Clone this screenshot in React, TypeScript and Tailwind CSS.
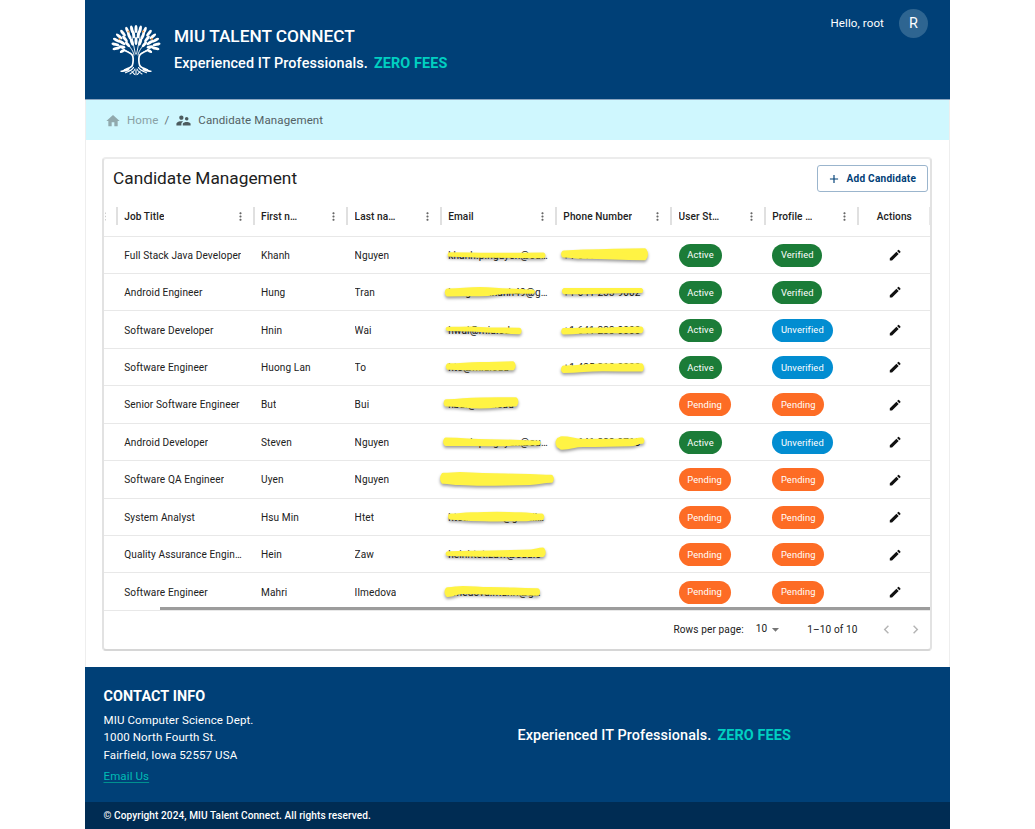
import type { ReactNode } from 'react';
import {
  MdAdd,
  MdArrowDropDown,
  MdChevronLeft,
  MdChevronRight,
  MdEdit,
  MdHome,
  MdMoreVert,
  MdSupervisorAccount,
} from 'react-icons/md';

type Station = [x: number, top: number, bottom: number];
type Status = 'Active' | 'Verified' | 'Unverified' | 'Pending';

interface Candidate {
  title: string;
  first: string;
  last: string;
  email: string;
  emailMark: Station[];
  phone?: string;
  phoneMark?: Station[];
  status: Status;
  profile: Status;
}

const candidates: Candidate[] = [
  {
    title: 'Full Stack Java Developer', first: 'Khanh', last: 'Nguyen',
    email: 'khanh.p.nguyen@ou…', emailMark: [[6.3, 15.2, 19.8], [50, 15.8, 20.8], [104.7, 15.5, 21.2]],
    phone: '+1 641 451 0000', phoneMark: [[5.1, 13.5, 20.6], [27, 12.5, 21.8], [91.1, 11.2, 23.2]],
    status: 'Active', profile: 'Verified',
  },
  {
    title: 'Android Engineer', first: 'Hung', last: 'Tran',
    email: 'hung.tranhanh49@g…', emailMark: [[4, 14.4, 22.4], [39, 13.1, 22.2], [69, 14.4, 19.8], [94.3, 15.5, 19.8]],
    phone: '+1 641 233 9002', phoneMark: [[5.8, 14.1, 20.2], [87.5, 14, 19.1]],
    status: 'Active', profile: 'Verified',
  },
  {
    title: 'Software Developer', first: 'Hnin', last: 'Wai',
    email: 'hwai@miu.edu', emailMark: [[4.3, 15.7, 20], [30, 15.6, 20.4], [49, 16.4, 21.7], [80.7, 16.7, 23.2]],
    phone: '+1 641 233 0000', phoneMark: [[5.1, 17, 23.5], [40, 16.4, 22.2], [87.5, 15.4, 22.2]],
    status: 'Active', profile: 'Unverified',
  },
  {
    title: 'Software Engineer', first: 'Huong Lan', last: 'To',
    email: 'hto@miu.edu', emailMark: [[4.7, 14.3, 20.8], [39, 13, 21.6], [74.3, 12.3, 21.2]],
    phone: '+1 425 310 0000', phoneMark: [[5.1, 16.5, 24], [47, 14.6, 22.2], [87.8, 14.3, 22.6]],
    status: 'Active', profile: 'Unverified',
  },
  {
    title: 'Senior Software Engineer', first: 'But', last: 'Bui',
    email: 'hbui@miu.edu', emailMark: [[2.7, 13.2, 20.6], [39, 11.4, 22.4], [77, 11.2, 20.4]],
    status: 'Pending', profile: 'Pending',
  },
  {
    title: 'Android Developer', first: 'Steven', last: 'Nguyen',
    email: 'khanh.p.nguyen@ou…', emailMark: [[2.3, 13.6, 22], [49, 15.2, 22.2], [100, 16.4, 21.2]],
    phone: '+1 641 233 9710', phoneMark: [[0.1, 13.6, 24], [6, 12.2, 25.8], [27, 14.8, 23], [74, 14.6, 22.3], [88.5, 13.6, 19.8]],
    status: 'Active', profile: 'Unverified',
  },
  {
    title: 'Software QA Engineer', first: 'Uyen', last: 'Nguyen',
    email: '', emailMark: [[-0.3, 11.8, 22.8], [19, 11.1, 24], [42, 12.1, 24.8], [89, 13, 24], [112.7, 13.8, 21.8]],
    status: 'Pending', profile: 'Pending',
  },
  {
    title: 'System Analyst', first: 'Hsu Min', last: 'Htet',
    email: 'htet.hsumin@gmail…', emailMark: [[7, 14.6, 20.7], [30, 13.2, 22], [56, 12.7, 22.5], [80, 13.2, 22.2], [103.3, 14.6, 21.2]],
    status: 'Pending', profile: 'Pending',
  },
  {
    title: 'Quality Assurance Engineer', first: 'Hein', last: 'Zaw',
    email: 'heinhtet.zaw@edu.c', emailMark: [[4.3, 15.3, 20], [49, 14.4, 20.8], [90, 13.4, 21], [104.3, 11.6, 21]],
    status: 'Pending', profile: 'Pending',
  },
  {
    title: 'Software Engineer', first: 'Mahri', last: 'Ilmedova',
    email: 'ilmedova.mahri@g…', emailMark: [[4, 14.2, 24], [22, 12.9, 20.9], [49, 14, 21.8], [99, 15.2, 22.7]],
    status: 'Pending', profile: 'Pending',
  },
];

const GRID =
  'grid grid-cols-[13px_136.8px_93.6px_93.6px_115.2px_115.2px_93.6px_93.6px_72px]';

const chipColors: Record<Status, string> = {
  Active: 'bg-[#1b7c38]',
  Verified: 'bg-[#1b7c38]',
  Unverified: 'bg-[#028dd1]',
  Pending: 'bg-[#fd6c25]',
};

/** Builds a rounded marker stroke outline from its cross-sections. */
function markerPath(stations: Station[]) {
  const inset = 2;
  const last = stations.length - 1;
  const xs = stations.map(([x], i) => x + (i === 0 ? 2.5 : i === last ? -2.5 : 0));
  const top = stations.map((s, i) => [xs[i], s[1] + inset]);
  const bottom = stations.map((s, i) => [xs[i], s[2] - inset]).reverse();
  const curve = (pts: number[][]) =>
    pts
      .slice(1)
      .map(([x, y], i) => {
        const [px, py] = pts[i];
        const mx = (px + x) / 2;
        return `C${mx} ${py} ${mx} ${y} ${x} ${y}`;
      })
      .join('');
  const [rx, ry] = bottom[0];
  const tr = top[last];
  const bulgeR = Math.max(0, (ry - tr[1]) / 3);
  const lb = bottom[last];
  const bulgeL = Math.max(0, (lb[1] - top[0][1]) / 3);
  return (
    `M${top[0][0]} ${top[0][1]}` + curve(top) +
    `Q${rx + bulgeR} ${(ry + tr[1]) / 2} ${rx} ${ry}` + curve(bottom) +
    `Q${lb[0] - bulgeL} ${(lb[1] + top[0][1]) / 2} ${top[0][0]} ${top[0][1]}Z`
  );
}

function Marker({ stations }: { stations: Station[] }) {
  return (
    <svg
      width="115"
      height="37"
      className="absolute top-0 left-0 overflow-visible drop-shadow-[0_2px_1.5px_rgba(0,0,0,0.38)]"
    >
      <path d={markerPath(stations)} fill="#fff344" stroke="#fff344" strokeWidth="4" strokeLinejoin="round" />
    </svg>
  );
}

function Chip({ label }: { label: Status }) {
  return (
    <span
      className={`flex h-[23px] items-center rounded-full px-[8.8px] pt-[0.5px] text-[9.36px] tracking-[0.0107em] text-white ${chipColors[label]}`}
    >
      {label}
    </span>
  );
}

function HeaderCell({ label }: { label: string }) {
  return (
    <div className="flex min-w-0 items-center justify-between border-r-2 border-[#e0e0e0] pr-[6px] pl-[6.4px]">
      <span className="truncate">{label}</span>
      <MdMoreVert className="size-[13px] shrink-0 text-[#666]" />
    </div>
  );
}

function Cell({ children }: { children?: ReactNode }) {
  return <div className="relative flex min-w-0 items-center px-[7.2px] pt-[1px]">{children}</div>;
}

function Text({ children }: { children: ReactNode }) {
  return <span className="truncate">{children}</span>;
}

const leaves: [x: number, y: number, angle: number, length: number][] = [
  [25, 4, 0, 8], [20.8, 4.4, -12, 8], [29.2, 4.4, 12, 8], [16.4, 5.6, -24, 8], [33.6, 5.6, 24, 8],
  [12, 8.2, -38, 8], [38, 8.2, 38, 8], [8.2, 11.4, -50, 8], [41.8, 11.4, 50, 8],
  [5.6, 15.2, -62, 8], [44.4, 15.2, 62, 8], [4.4, 19.4, -76, 8], [45.6, 19.4, 76, 8],
  [5.4, 23.4, -104, 8], [44.6, 23.4, 104, 8],
  [22.6, 9.5, -8, 8], [27.4, 9.5, 8, 8], [18.2, 11, -22, 8], [31.8, 11, 22, 8],
  [14, 13.8, -38, 8], [36, 13.8, 38, 8], [11, 17.6, -56, 8], [39, 17.6, 56, 8],
  [11, 22, -80, 7], [39, 22, 80, 7], [11.5, 26, -120, 6], [38.5, 26, 120, 6],
  [20.8, 17, -18, 8], [29.2, 17, 18, 8], [16.6, 19.4, -40, 7], [33.4, 19.4, 40, 7],
  [25, 16, 0, 8],
];

function TreeLogo() {
  return (
    <svg viewBox="0 0 50 51" className="h-[51px] w-[50px]" fill="none">
      {leaves.map(([x, y, angle, length], i) => (
        <ellipse key={i} cx={x} cy={y} rx="1.5" ry={length / 2} fill="#fff" transform={`rotate(${angle} ${x} ${y})`} />
      ))}
      <g stroke="#fff" strokeWidth="0.9" strokeLinecap="round">
        <path d="M22 31C20 27 14 26 8 21M28 31C30 27 36 26 42 21M23 30C22 24 17 21 14 14M27 30C28 24 33 21 36 14M24.4 29L21 12M25.6 29L29 12" />
      </g>
      <path
        d="M13.5 25.5c3.5 1.4 6.8 2.7 8 5 1 2.5.8 7.5-.2 10-1.3 2.2-4.5 3.2-7.8 4.300M36.5 25.5c-3.5 1.4-6.8 2.7-8 5-1 2.5-.8 7.5.2 10 1.300 2.200 4.500 3.200 7.800 4.300"
        stroke="#fff"
        strokeWidth="1.7"
        strokeLinecap="round"
      />
      <g stroke="#fff" strokeWidth="1.1" strokeLinecap="round">
        <path d="M18 43.5C15.5 45 12.5 45.6 9.5 46.2 13 46.8 15.5 46 18 44.8M32 43.5c2.5 1.5 5.5 2.1 8.5 2.7-3.5.6-6-.2-8.5-1.4M22.5 42.5c-1 2.5-4 3.6-8 5.2M27.5 42.5c1 2.5 4 3.6 8 5.2M24 44c-.5 2.2-2.5 3.2-5 5M26 44c.5 2.2 2.5 3.2 5 5M25 45v4.8M21 46.5l2.5 2.8M29 46.5l-2.5 2.8" />
      </g>
      <g fill="#e8964a">
        <circle cx="8.5" cy="14" r="1.1" />
        <circle cx="17.5" cy="6.5" r="1.1" />
        <circle cx="32" cy="6.5" r="1.1" />
        <circle cx="41" cy="14" r="1.1" />
      </g>
    </svg>
  );
}

function Header() {
  return (
    <header className="flex h-[99px] justify-between bg-[#004077] pr-[22px] pl-[26px] text-white">
      <div className="flex items-start">
        <div className="pt-[25px]">
          <TreeLogo />
        </div>
        <div className="pt-[24px] pl-[13px] font-medium">
          <h1 className="text-[17.28px] leading-[24px]">MIU TALENT CONNECT</h1>
          <p className="mt-[4px] flex gap-[6px] text-[14.4px] leading-[24px] tracking-[0.0075em]">
            Experienced IT Professionals.
            <span className="font-bold text-[#00cfc1]">ZERO FEES</span>
          </p>
        </div>
      </div>
      <div className="flex h-[47px] items-center gap-[15px] text-[11.52px] tracking-[0.00938em]">
        <span>Hello, root</span>
        <span className="flex size-[29px] items-center justify-center rounded-full bg-[#2e6591] pt-[1px] text-[14.4px]">R</span>
      </div>
    </header>
  );
}

function Breadcrumbs() {
  return (
    <nav className="flex h-[40px] items-center bg-[#cff7fe] pt-[1px] pl-[19px] text-[11.52px] tracking-[0.00938em] text-[#666f72]">
      <MdHome className="size-[16px] text-[#91a9ad]" />
      <span className="ml-[6px] text-[#89a0a5]">Home</span>
      <span className="ml-[6px]">/</span>
      <MdSupervisorAccount className="ml-[6px] size-[17px] text-[#4c5b5e]" />
      <span className="ml-[6px] text-[#536164]">Candidate Management</span>
    </nav>
  );
}

function CandidateTable() {
  return (
    <section className="overflow-hidden rounded-[4px] border-2 border-[#e2e2e2] border-t-[#ececec] border-b-[#d6d6d6] bg-white text-[#212121]">
      <div className="flex h-[38px] items-center justify-between pr-[2px] pl-[9px]">
        <h2 className="mt-[2px] text-[17.28px]">Candidate Management</h2>
        <button className="mt-[1px] flex h-[27px] w-[111px] items-center rounded-[3px] border border-[#9bb5cd] pl-[8.5px] text-[10.08px] font-bold tracking-[0.024em] whitespace-nowrap text-[#004077]">
          <MdAdd className="mr-[6px] size-[14px] shrink-0" />
          Add Candidate
        </button>
      </div>
      <div className="relative text-[10.08px] tracking-[0.0107em]">
        <div className={`${GRID} h-[39.5px] items-center border-b border-[#e8e8e8] pl-[0.8px] font-medium [&>div]:h-[18px]`}>
          <div className="relative overflow-hidden border-r-2 border-[#e0e0e0]">
            <MdMoreVert className="absolute top-[2.5px] left-[-7px] size-[13px] text-[#999]" />
          </div>
          <HeaderCell label="Job Title" />
          <HeaderCell label="First n…" />
          <HeaderCell label="Last na…" />
          <HeaderCell label="Email" />
          <HeaderCell label="Phone Number" />
          <HeaderCell label="User St…" />
          <HeaderCell label="Profile …" />
          <div className="flex items-center justify-center border-r-2 border-[#e8e8e8]">Actions</div>
        </div>
        {candidates.map((c, i) => (
          <div key={i} className={`${GRID} h-[37.44px] border-b border-[#e8e8e8]`}>
            <Cell />
            <Cell><Text>{c.title}</Text></Cell>
            <Cell><Text>{c.first}</Text></Cell>
            <Cell><Text>{c.last}</Text></Cell>
            <Cell>
              <span className="whitespace-nowrap">{c.email}</span>
              <Marker stations={c.emailMark} />
            </Cell>
            <Cell>
              {c.phone && <Text>{c.phone}</Text>}
              {c.phoneMark && <Marker stations={c.phoneMark} />}
            </Cell>
            <Cell><Chip label={c.status} /></Cell>
            <Cell><Chip label={c.profile} /></Cell>
            <div className="flex items-center justify-center pt-[1px] pl-[1px] text-[#111]">
              <MdEdit className="size-[14.4px]" />
            </div>
          </div>
        ))}
        <div className="absolute right-0 bottom-[0.5px] left-[56px] h-[3px] bg-[#9c9c9c]" />
      </div>
      <footer className="flex h-[38px] items-center justify-end pr-[6.5px] text-[10.08px] tracking-[0.0107em]">
        <span>Rows per page:</span>
        <span className="mb-[2px] ml-[12px]">10</span>
        <MdArrowDropDown className="size-[17px] text-[#757575]" />
        <span className="ml-[23px]">1–10 of 10</span>
        <MdChevronLeft className="ml-[20px] size-[17px] text-[#b5b5b5]" />
        <MdChevronRight className="ml-[12px] size-[17px] text-[#b5b5b5]" />
      </footer>
    </section>
  );
}

function Footer() {
  return (
    <footer className="text-white">
      <div className="grid h-[135.5px] grid-cols-[414px_1fr] bg-[#004077] pl-[18.5px]">
        <div className="pt-[18px] text-[11.52px] leading-[17.5px] tracking-[0.00938em]">
          <h3 className="mb-[4px] text-[14.4px] leading-[23px] font-bold">CONTACT INFO</h3>
          <p>MIU Computer Science Dept.</p>
          <p>1000 North Fourth St.</p>
          <p>Fairfield, Iowa 52557 USA</p>
          <a className="mt-[4px] inline-block text-[#00bcb5] underline decoration-[#00908f] underline-offset-2">Email Us</a>
        </div>
        <p className="flex h-full items-center gap-[6px] pt-[3px] text-[14.4px] font-medium tracking-[0.0075em]">
          Experienced IT Professionals.
          <span className="font-bold text-[#00cfc1]">ZERO FEES</span>
        </p>
      </div>
      <div className="flex h-[27px] items-center bg-[#002c53] pl-[18.5px] text-[10.08px] font-medium tracking-[0.008em]">
        © Copyright 2024, MIU Talent Connect. All rights reserved.
      </div>
    </footer>
  );
}

export default function App() {
  return (
    <div className="flex h-[829px] justify-center overflow-hidden bg-white font-[Roboto,sans-serif]">
      <div className="flex w-[865px] flex-col border-x border-[#eee]">
        <div className="-mx-px border-b border-[#8aa5c0]">
          <Header />
        </div>
        <Breadcrumbs />
        <main className="flex-1 pt-[17px] pr-[17px] pl-[16px]">
          <CandidateTable />
        </main>
        <div className="-mx-px">
          <Footer />
        </div>
      </div>
    </div>
  );
}
